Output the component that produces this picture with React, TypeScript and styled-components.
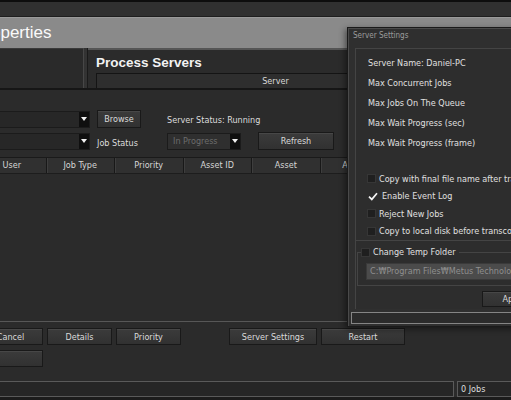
import styled, { createGlobalStyle } from 'styled-components'

const ui = `"DejaVu Sans Condensed", "Liberation Sans", sans-serif`

const GlobalStyle = createGlobalStyle`
  html, body {
    margin: 0;
    padding: 0;
    background: #2b2b2b;
  }
  * {
    box-sizing: border-box;
  }
`

const columns = ['User', 'Job Type', 'Priority', 'Asset ID', 'Asset', 'Agent']

const serverInfo = [
  'Server Name: Daniel-PC',
  'Max Concurrent Jobs',
  'Max Jobs On The Queue',
  'Max Wait Progress (sec)',
  'Max Wait Progress (frame)',
]

const options = [
  { label: 'Copy with final file name after transcoding', checked: false },
  { label: 'Enable Event Log', checked: true },
  { label: 'Reject New Jobs', checked: false },
  { label: 'Copy to local disk before transcoding', checked: false },
]

const CheckBox = ({ checked }: { checked?: boolean }) => (
  <Box $checked={checked}>
    {checked && (
      <svg width="10" height="9" viewBox="0 0 10 9">
        <path d="M1 4.6 L3.8 7.4 L9 1.2" fill="none" stroke="#f4f4f4" strokeWidth="1.7" />
      </svg>
    )}
  </Box>
)

export default function App() {
  return (
    <>
      <GlobalStyle />
      <Window>
        <TopStrip />
        <TitleBar>
          <Title>Properties</Title>
        </TitleBar>

        <HeaderPanes>
          <LeftPane />
          <Splitter />
          <RightPane>
            <PaneTitle>Process Servers</PaneTitle>
            <ServerHeader>Server</ServerHeader>
          </RightPane>
        </HeaderPanes>
        <Divider />

        <Toolbar>
          <Combo $bleed>
            <ComboValue />
            <ComboArrow />
          </Combo>
          <Button $width={44} $height={18}>
            Browse
          </Button>
          <Label $drop={2}>Server Status: Running</Label>
          <span />

          <Combo $bleed>
            <ComboValue />
            <ComboArrow />
          </Combo>
          <Label $drop={3}>Job Status</Label>
          <Combo $width={74} $disabled>
            <ComboValue>In Progress</ComboValue>
            <ComboArrow />
          </Combo>
          <Button $height={18}>Refresh</Button>
        </Toolbar>

        <TableHeader>
          {columns.map((c) => (
            <HeaderCell key={c}>{c}</HeaderCell>
          ))}
        </TableHeader>
        <TableBody />

        <ButtonArea>
          <ButtonRow>
            <Button $width={65}>Cancel</Button>
            <Button $width={65}>Details</Button>
            <Button $width={65}>Priority</Button>
            <Button $width={88} $push={44}>
              Server Settings
            </Button>
            <Button $width={84}>Restart</Button>
          </ButtonRow>
          <ButtonRow>
            <Button $width={65} />
          </ButtonRow>
        </ButtonArea>

        <StatusBar>
          <StatusField />
          <JobsField>0 Jobs</JobsField>
        </StatusBar>
        <BottomEdge />

        <Dialog>
          <DialogTitle>Server Settings</DialogTitle>
          <DialogBody>
            <Panel>
              <InfoGroup>
                {serverInfo.map((s) => (
                  <InfoRow key={s}>{s}</InfoRow>
                ))}
                <Checklist>
                  {options.map((o) => (
                    <CheckRow key={o.label}>
                      <CheckBox checked={o.checked} />
                      {o.label}
                    </CheckRow>
                  ))}
                </Checklist>
              </InfoGroup>

              <TempGroup>
                <TempLegend>
                  <CheckBox />
                  Change Temp Folder
                </TempLegend>
                <PathField>C:₩Program Files₩Metus Technology₩Temp</PathField>
              </TempGroup>

              <ApplyRow>
                <Button $width={64} $height={16}>
                  Apply
                </Button>
              </ApplyRow>
            </Panel>
            <ProgressField />
          </DialogBody>
        </Dialog>
      </Window>
    </>
  )
}

const Window = styled.div`
  position: relative;
  width: 511px;
  height: 400px;
  overflow: hidden;
  display: flex;
  flex-direction: column;
  background: #2b2b2b;
  font-family: ${ui};
  font-size: 9px;
  color: #d9d9d9;
`

const TopStrip = styled.div`
  flex: 0 0 17px;
  background: #303030;
  border-top: 2px solid #0d0d0d;
  border-bottom: 1px solid #1e1e1e;
`

const TitleBar = styled.div`
  flex: 0 0 31px;
  display: flex;
  align-items: center;
  background: #8a8a8a;
  border-top: 1px solid #9a9a9a;
`

const Title = styled.h1`
  margin: 0 0 0 -26px;
  font-family: 'Liberation Sans', Arial, sans-serif;
  font-size: 17px;
  font-weight: normal;
  color: #fafafa;
`

const HeaderPanes = styled.div`
  flex: 0 0 40px;
  display: flex;
`

const LeftPane = styled.div`
  width: 83px;
  background: #2a2a2a;
  border-top: 1px solid #3a3a3a;
`

const Splitter = styled.div`
  width: 5px;
  background: #333;
  border-left: 1px solid #474747;
  border-right: 1px solid #1a1a1a;
`

const RightPane = styled.div`
  flex: 1;
  display: flex;
  flex-direction: column;
  padding: 5px 0 0 8px;
  background: #2b2b2b;
  border-top: 2px solid #555;
`

const PaneTitle = styled.h2`
  margin: 0;
  font-family: 'Liberation Sans', Arial, sans-serif;
  font-size: 13.5px;
  line-height: 16px;
  font-weight: bold;
  color: #f2f2f2;
`

const ServerHeader = styled.div`
  margin-top: auto;
  width: 358px;
  height: 15px;
  line-height: 14px;
  text-align: center;
  background: #2e2e2e;
  border-top: 1px solid #141414;
  border-left: 1px solid #141414;
`

const Divider = styled.div`
  flex: 0 0 2px;
  background: #161616;
`

const Toolbar = styled.div`
  flex: 0 0 67px;
  display: grid;
  grid-template-columns: 90px 63px 84px 76px;
  grid-auto-rows: 18px;
  column-gap: 7px;
  row-gap: 4px;
  align-items: center;
  padding: 20px 0 7px;
`

const Combo = styled.div<{ $width?: number; $bleed?: boolean; $disabled?: boolean }>`
  display: flex;
  height: 17px;
  width: ${(p) => (p.$bleed ? 'calc(100% + 22px)' : p.$width ? `${p.$width}px` : '100%')};
  margin-left: ${(p) => (p.$bleed ? '-22px' : '0')};
  background: ${(p) => (p.$disabled ? '#2f2f2f' : '#272727')};
  border: 1px solid #1b1b1b;
  color: ${(p) => (p.$disabled ? '#6c6c6c' : '#d9d9d9')};
`

const ComboValue = styled.div`
  flex: 1;
  padding-left: 5px;
  line-height: 15px;
  white-space: nowrap;
  overflow: hidden;
`

const ComboArrow = styled.div`
  width: 10px;
  display: flex;
  align-items: center;
  justify-content: center;
  background: #0f0f0f;

  &::after {
    content: '';
    border-left: 3px solid transparent;
    border-right: 3px solid transparent;
    border-top: 4px solid #f2f2f2;
  }
`

const Label = styled.span<{ $drop?: number }>`
  white-space: nowrap;
  color: #dcdcdc;
  padding-top: ${(p) => p.$drop ?? 0}px;
`

const Button = styled.button<{ $width?: number; $height?: number; $push?: number }>`
  width: ${(p) => (p.$width ? `${p.$width}px` : '100%')};
  height: ${(p) => p.$height ?? 17}px;
  margin: 0 0 0 ${(p) => p.$push ?? 0}px;
  padding: 0;
  font-family: ${ui};
  font-size: 9px;
  color: #dadada;
  background: linear-gradient(#3b3b3b, #313131);
  border: 1px solid #191919;
  box-shadow: inset 0 1px 0 #474747;
  flex-shrink: 0;
`

const TableHeader = styled.div`
  flex: 0 0 17px;
  display: flex;
  margin-left: -22px;
  background: #303030;
  border-top: 1px solid #1a1a1a;
  border-bottom: 1px solid #1d1d1d;
`

const HeaderCell = styled.div`
  flex: 0 0 68.5px;
  line-height: 15px;
  text-align: center;
  white-space: nowrap;
  border-right: 1px solid #181818;
  box-shadow: inset 1px 0 #3e3e3e;
  color: #d6d6d6;
`

const TableBody = styled.div`
  flex: 0 0 147px;
  background: #2b2b2b;
`

const ButtonArea = styled.div`
  flex: 0 0 60px;
  display: flex;
  flex-direction: column;
  gap: 5px;
  margin-left: -22px;
  padding: 6px 0 14px;
  border-top: 1px solid #575757;
`

const ButtonRow = styled.div`
  display: flex;
  gap: 4px;
`

const StatusBar = styled.div`
  flex: 0 0 16px;
  display: flex;
  gap: 3px;
`

const StatusField = styled.div`
  flex: 1;
  margin-left: -2px;
  background: #262626;
  border: 1px solid #5a5a5a;
`

const JobsField = styled.div`
  width: 54px;
  padding-left: 3px;
  line-height: 14px;
  background: #262626;
  border: 1px solid #5a5a5a;
  border-right: none;
  color: #dedede;
`

const BottomEdge = styled.div`
  flex: 1;
  background: #1c1c1c;
`

const Dialog = styled.div`
  position: absolute;
  left: 347px;
  top: 27px;
  width: 200px;
  height: 300px;
  display: flex;
  flex-direction: column;
  background: #2f2f2f;
  border: 1px solid #1a1a1a;
  box-shadow: inset 1px 1px 0 #4a4a4a, -2px 2px 6px rgba(0, 0, 0, 0.45);
`

const DialogTitle = styled.div`
  height: 15px;
  padding-left: 5px;
  line-height: 16px;
  font-size: 8px;
  color: #9c9c9c;
`

const DialogBody = styled.div`
  padding: 5px 0 0 7px;
`

const Panel = styled.div`
  height: 261px;
  border-left: 1px solid #444;
  border-top: 1px solid #444;
  background: #2d2d2d;
`

const InfoGroup = styled.div`
  height: 192px;
  padding: 4px 0 0 11px;
  border-bottom: 1px solid #444;
`

const InfoRow = styled.div`
  height: 20px;
  line-height: 20px;
  padding-left: 1px;
  white-space: nowrap;
  color: #e0e0e0;
`

const Checklist = styled.div`
  margin-top: 17px;
`

const CheckRow = styled.div`
  height: 17.5px;
  display: flex;
  align-items: center;
  gap: 3px;
  white-space: nowrap;
  color: #e0e0e0;
`

const Box = styled.span<{ $checked?: boolean }>`
  flex: 0 0 9px;
  height: 9px;
  display: flex;
  align-items: center;
  justify-content: center;
  background: ${(p) => (p.$checked ? 'transparent' : '#1f1f1f')};
  border: 1px solid ${(p) => (p.$checked ? 'transparent' : '#363636')};
`

const TempGroup = styled.fieldset`
  margin: 5px 0 0 1px;
  padding: 0 0 5px 8px;
  min-width: 0;
  border: 1px solid #444;
  border-right: none;
`

const TempLegend = styled.legend`
  display: flex;
  align-items: center;
  gap: 3px;
  height: 12px;
  margin-left: -5px;
  padding: 0 3px 0 0;
  white-space: nowrap;
  color: #e0e0e0;
`

const PathField = styled.div`
  margin-top: 5px;
  height: 17px;
  padding-left: 3px;
  line-height: 15px;
  white-space: nowrap;
  overflow: hidden;
  background: #4b4b4b;
  border: 1px solid #3a3a3a;
  color: #8f8f8f;
`

const ApplyRow = styled.div`
  display: flex;
  padding: 5px 0 0 126px;
`

const ProgressField = styled.div`
  height: 12px;
  margin: 3px 0 0 -4px;
  background: #2b2b2b;
  border: 1px solid #858585;
  border-right: none;
`
